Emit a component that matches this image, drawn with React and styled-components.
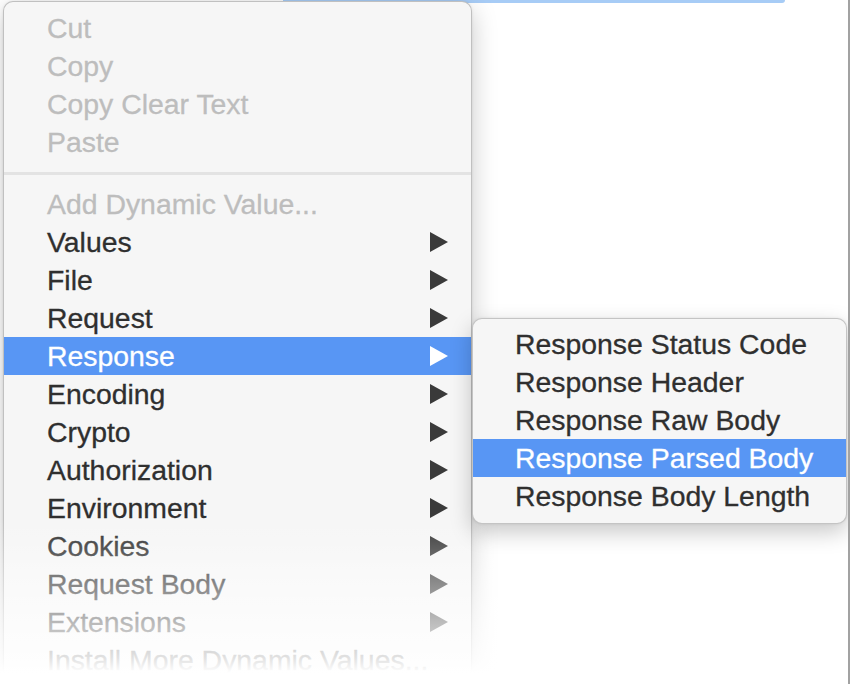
import React from "react";
import styled, { createGlobalStyle } from "styled-components";

const GlobalStyle = createGlobalStyle`
  html, body { margin: 0; padding: 0; background: #ffffff; }
  body { font-family: "Liberation Sans", Arial, sans-serif; }
  #root { width: 850px; height: 684px; overflow: hidden; }
`;

const Page = styled.div`
  position: relative;
  width: 848px;
  height: 684px;
  overflow: hidden;
  background: #ffffff;
  border-right: 2px solid #a2a2a2;
`;

const TopBar = styled.div`
  margin-left: 283px;
  width: 502px;
  height: 3px;
  background: #a7ccf6;
  border-bottom-right-radius: 3px;
`;

const MenuLayer = styled.div`
  position: absolute;
  left: 3px;
  top: 1px;
  width: 560px;
  height: 700px;
`;

const Menu = styled.div`
  width: 469px;
  box-sizing: border-box;
  background: #f6f6f6;
  border: 1px solid rgba(0, 0, 0, 0.22);
  border-radius: 10px;
  box-shadow: 0 8px 26px rgba(0, 0, 0, 0.22), 0 0 3px rgba(0, 0, 0, 0.08);
  padding: 7px 0 40px;
`;

const SubMenu = styled.div`
  position: absolute;
  z-index: 2;
  left: 469px;
  top: 317px;
  width: 375px;
  box-sizing: border-box;
  background: #f6f6f6;
  border: 1px solid rgba(0, 0, 0, 0.2);
  border-radius: 10px;
  box-shadow: 0 8px 22px rgba(0, 0, 0, 0.22), 0 0 3px rgba(0, 0, 0, 0.08);
  padding: 6px 0 8px;
`;

const Row = styled.div`
  display: flex;
  align-items: center;
  justify-content: space-between;
  height: 38px;
  line-height: 38px;
  padding: 0 23px 0 ${(p) => p.$indent}px;
  font-size: 28.4px;
  white-space: nowrap;
  -webkit-text-stroke: 0.3px currentColor;
  color: ${(p) => (p.$active ? "#ffffff" : p.$disabled ? "#bdbdbd" : "#2f2f2f")};
  background: ${(p) => (p.$active ? "#5896f4" : "transparent")};
`;

const Label = styled.span`
  display: block;
`;

const Arrow = styled.svg`
  display: block;
  width: 18px;
  height: 20px;
  fill: ${(p) => (p.$active ? "#ffffff" : p.$disabled ? "#bdbdbd" : "#3a3a3a")};
`;

const Separator = styled.div`
  height: 24px;
  display: flex;
  align-items: center;
  &::before {
    content: "";
    display: block;
    width: 100%;
    height: 3px;
    background: #e3e3e3;
  }
`;

const Fade = styled.div`
  position: absolute;
  z-index: 1;
  left: -3px;
  right: 0;
  top: 519px;
  bottom: 0;
  pointer-events: none;
  background: linear-gradient(
    to bottom,
    rgba(255, 255, 255, 0) 0px,
    rgba(255, 255, 255, 0.17) 26px,
    rgba(255, 255, 255, 0.42) 64px,
    rgba(255, 255, 255, 0.66) 102px,
    rgba(255, 255, 255, 0.86) 138px,
    rgba(255, 255, 255, 1) 153px
  );
`;

const mainItems = [
  { label: "Cut", disabled: true },
  { label: "Copy", disabled: true },
  { label: "Copy Clear Text", disabled: true },
  { label: "Paste", disabled: true },
  { sep: true },
  { label: "Add Dynamic Value...", disabled: true },
  { label: "Values", sub: true },
  { label: "File", sub: true },
  { label: "Request", sub: true },
  { label: "Response", sub: true, active: true },
  { label: "Encoding", sub: true },
  { label: "Crypto", sub: true },
  { label: "Authorization", sub: true },
  { label: "Environment", sub: true },
  { label: "Cookies", sub: true },
  { label: "Request Body", sub: true },
  { label: "Extensions", sub: true },
  { label: "Install More Dynamic Values..." },
];

const subItems = [
  { label: "Response Status Code" },
  { label: "Response Header" },
  { label: "Response Raw Body" },
  { label: "Response Parsed Body", active: true },
  { label: "Response Body Length" },
];

function SubArrow({ active, disabled }) {
  return (
    <Arrow viewBox="0 0 18 20" $active={active} $disabled={disabled}>
      <polygon points="0,0 18,10 0,20" />
    </Arrow>
  );
}

export default function App() {
  return (
    <>
      <GlobalStyle />
      <Page>
        <TopBar />
        <MenuLayer>
          <Menu>
            {mainItems.map((it, i) =>
              it.sep ? (
                <Separator key={i} />
              ) : (
                <Row key={i} $indent={43} $active={it.active} $disabled={it.disabled}>
                  <Label>{it.label}</Label>
                  {it.sub && <SubArrow active={it.active} disabled={it.disabled} />}
                </Row>
              )
            )}
          </Menu>
          <SubMenu>
            {subItems.map((it, i) => (
              <Row key={i} $indent={42} $active={it.active}>
                <Label>{it.label}</Label>
              </Row>
            ))}
          </SubMenu>
          <Fade />
        </MenuLayer>
      </Page>
    </>
  );
}
